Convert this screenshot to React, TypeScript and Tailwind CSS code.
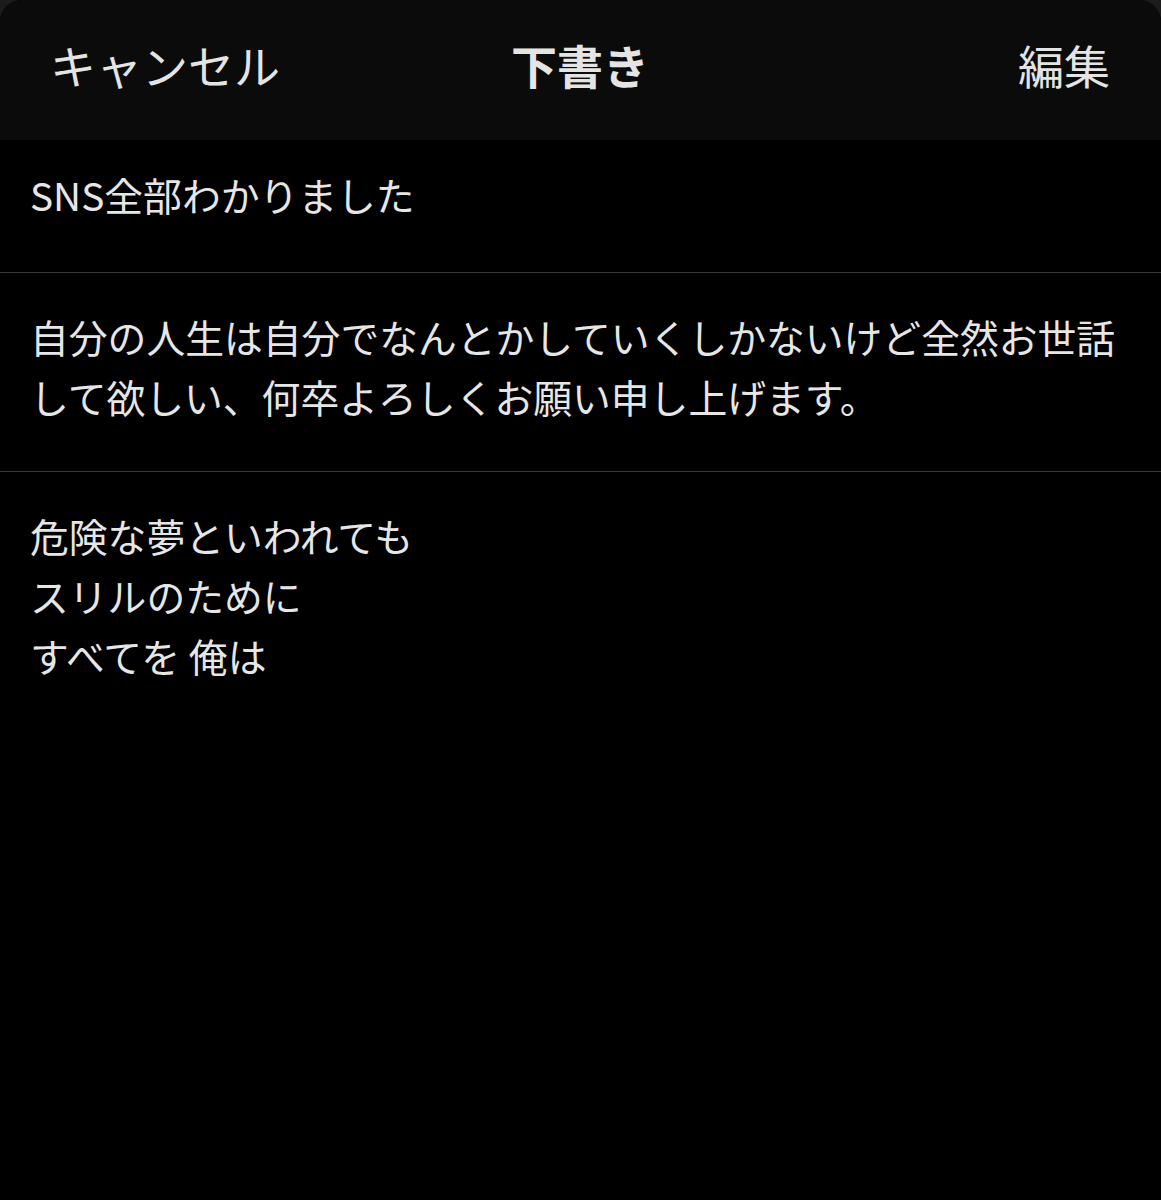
const notes: string[][] = [
  ['SNS全部わかりました'],
  ['自分の人生は自分でなんとかしていくしかないけど全然お世話', 'して欲しい、何卒よろしくお願い申し上げます。'],
  ['危険な夢といわれても', 'スリルのために', 'すべてを 俺は'],
]

export default function App() {
  return (
    <div
      className="min-h-[1200px] bg-[#1c1c1c] text-[#e6e6e6]"
      style={{ fontFamily: '"Noto Sans CJK JP", "Noto Sans", sans-serif' }}
    >
      <div className="min-h-[1200px] rounded-t-[22px] bg-black overflow-hidden">
        {/* Header */}
        <div className="flex h-[140px] items-center justify-between bg-[#0b0b0b] pb-[12px] pl-[50px] pr-[51px] text-[46px] text-[#e4e4e4]">
          <span className="w-[260px]">キャンセル</span>
          <span className="font-bold">下書き</span>
          <span className="w-[260px] text-right">編集</span>
        </div>

        {/* Draft list */}
        <div>
          {notes.map((lines, i) => (
            <div
              key={i}
              className={
                'px-[30px] text-[38.8px] leading-[60px] ' +
                (i === 0 ? 'pt-[24px] pb-[48px] ' : 'pt-[33px] pb-[45px] ') +
                (i < notes.length - 1 ? 'border-b border-[#3a3a3a]' : '')
              }
            >
              {lines.map((line, j) => (
                <div key={j} className="whitespace-nowrap">
                  {line}
                </div>
              ))}
            </div>
          ))}
        </div>
      </div>
    </div>
  )
}
